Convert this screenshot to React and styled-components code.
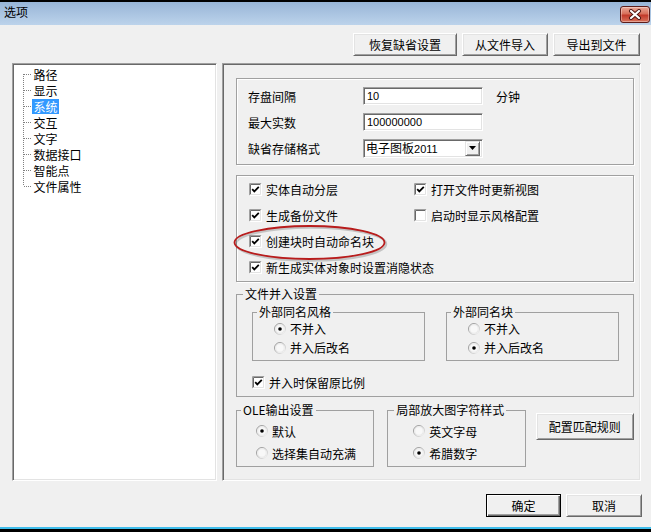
import React from 'react'
import styled, { createGlobalStyle } from 'styled-components'

const GlobalStyle = createGlobalStyle`
  html, body {
    margin: 0;
    padding: 0;
    background: #000;
  }
  body {
    font-family: "Liberation Sans", "Noto Sans CJK SC", sans-serif;
    font-size: 12px;
    color: #000;
  }
  * {
    box-sizing: border-box;
  }
`

const Window = styled.div`
  width: 651px;
  height: 527px;
  margin-top: 2px;
  background: #f0f0f0;
  border-bottom: 2px solid #3fbdeb;
  display: flex;
  flex-direction: column;
`

const TitleBar = styled.div`
  height: 23px;
  display: flex;
  justify-content: space-between;
  align-items: flex-start;
  padding: 0 1px 0 4px;
  background: linear-gradient(#98b5d7, #bcd3eb);
`

const Title = styled.span`
  line-height: 23px;
  font-size: 12px;
`

const CloseButton = styled.div`
  width: 30px;
  height: 17px;
  margin-top: 4px;
  border: 1px solid #5e1d1a;
  border-radius: 3px;
  display: flex;
  align-items: center;
  justify-content: center;
  background: linear-gradient(#eaa897, #d8705b 45%, #c23a2a 55%, #d9735c);
  box-shadow: inset 0 0 0 1px rgba(255, 255, 255, 0.35);
`

const TopBar = styled.div`
  display: flex;
  justify-content: flex-end;
  gap: 5px;
  margin-top: 8px;
  padding-right: 11px;
`

const Button = styled.button`
  width: ${p => p.$w}px;
  height: ${p => p.$h || 23}px;
  padding: 0;
  margin: 0;
  font-family: "Noto Sans CJK SC", sans-serif;
  font-size: 12px;
  color: #000;
  background: #f0f0f0;
  border: 1px solid;
  border-color: ${p => (p.$default ? '#000' : '#fff #696969 #696969 #fff')};
  box-shadow: ${p =>
    p.$default
      ? 'inset 1px 1px 0 #fff, inset -1px -1px 0 #696969, inset -2px -2px 0 #a0a0a0'
      : 'inset 1px 1px 0 #e3e3e3, inset -1px -1px 0 #a0a0a0'};
`

const Main = styled.div`
  display: flex;
  gap: 5px;
  margin-top: 7px;
  padding-left: 12px;
  height: 418px;
`

const sunken = `
  border: 1px solid;
  border-color: #a0a0a0 #fff #fff #a0a0a0;
  box-shadow: inset 1px 1px 0 #696969, inset -1px -1px 0 #e3e3e3;
`

const TreePanel = styled.div`
  width: 205px;
  background: #fff;
  ${sunken}
  padding: 2px 0 0 10px;
  font-family: "Noto Sans CJK SC", sans-serif;
`

const TreeItem = styled.div`
  display: flex;
  align-items: center;
  height: 16px;
`

const Connector = styled.span`
  width: 9px;
  height: 16px;
  flex: none;
  background-image: repeating-linear-gradient(to bottom, #808080 0 1px, transparent 1px 2px),
    repeating-linear-gradient(to right, #808080 0 1px, transparent 1px 2px);
  background-repeat: no-repeat;
  background-size: 1px ${p => (p.$pos === 'mid' ? 16 : 8)}px, 8px 1px;
  background-position: 0 ${p => (p.$pos === 'first' ? 8 : 0)}px, 1px 8px;
`

const TreeLabel = styled.span`
  padding: 0 1.5px;
  line-height: 15px;
  font-size: 12px;
  background: ${p => (p.$selected ? '#3399ff' : 'transparent')};
  color: ${p => (p.$selected ? '#fff' : '#000')};
`

const Panel = styled.div`
  width: 419px;
  ${sunken}
  padding: 14px 6px 0 13px;
  display: flex;
  flex-direction: column;
  font-family: "Noto Sans CJK SC", sans-serif;
`

const Box = styled.div`
  position: relative;
  border: 1px solid #a0a0a0;
  box-shadow: inset 1px 1px 0 #fff, 1px 1px 0 #fff;
`

const SettingsBox = styled(Box)`
  height: 87px;
  padding: 8px 0 0 11px;
  display: flex;
  flex-direction: column;
  gap: 8px;
`

const FormRow = styled.div`
  display: flex;
  align-items: center;
  height: 18px;
`

const FieldLabel = styled.span`
  width: 115px;
  font-size: 12px;
`

const TextInput = styled.input`
  width: 120px;
  height: 18px;
  margin: 0;
  padding: 0 0 0 3px;
  background: #fff;
  font-family: "Liberation Sans", sans-serif;
  font-size: 11px;
  color: #000;
  outline: none;
  ${sunken}
`

const Unit = styled.span`
  margin-left: 13px;
  font-size: 12px;
`

const Select = styled.div`
  width: 120px;
  height: 19px;
  display: flex;
  align-items: center;
  background: #fff;
  ${sunken}
  padding: 0 2px 0 2px;
`

const SelectText = styled.span`
  flex: 1;
  font-size: 12px;
  line-height: 17px;
`

const SelectNum = styled.span`
  font-family: "Liberation Sans", sans-serif;
  font-size: 11px;
`

const ArrowButton = styled.span`
  width: 15px;
  height: 15px;
  display: flex;
  align-items: center;
  justify-content: center;
  background: #f0f0f0;
  border: 1px solid;
  border-color: #e3e3e3 #696969 #696969 #e3e3e3;
  box-shadow: inset 1px 1px 0 #fff, inset -1px -1px 0 #a0a0a0;
`

const CheckBoxGroup = styled(Box)`
  margin-top: 10px;
  height: 107px;
  padding-left: 12px;
  display: grid;
  grid-template-columns: 165px 1fr;
  grid-auto-rows: 26px;
`

const OptionRow = styled.label`
  display: flex;
  align-items: center;
  height: ${p => p.$h || 26}px;
  font-size: 12px;
  white-space: nowrap;
  grid-column: ${p => (p.$wide ? '1 / span 2' : 'auto')};
`

const OptionText = styled.span`
  margin-left: ${p => p.$gap || 4}px;
`

const Annotation = styled.svg`
  position: absolute;
  left: -5px;
  top: 48px;
  pointer-events: none;
`

const GroupBox = styled.fieldset`
  margin: 0;
  padding: 0;
  min-width: 0;
  width: ${p => (p.$w ? `${p.$w}px` : 'auto')};
  border: 1px solid #a0a0a0;
  border-top-color: #a0a0a0;
`

const Legend = styled.legend`
  margin-left: ${p => p.$ml || 5}px;
  padding: 0 2px;
  line-height: 14px;
  font-size: 12px;
`

const MergeGroup = styled(GroupBox)`
  margin-top: 5px;
`

const MergeBody = styled.div`
  padding: 4px 14px 6px 15px;
`

const InnerRow = styled.div`
  display: flex;
  gap: 21px;
`

const RadioList = styled.div`
  padding: ${p => p.$pt || 0}px 0 ${p => p.$pb || 3}px ${p => p.$pl}px;
`

const KeepRatio = styled(OptionRow)`
  margin-top: 13px;
`

const BottomGroups = styled.div`
  display: flex;
  align-items: flex-start;
  margin-top: 6px;
`

const SideGroup = styled(GroupBox)`
  margin-left: ${p => p.$ml || 0}px;
`

const RuleButton = styled(Button)`
  margin: 10px 0 0 10px;
`

const Footer = styled.div`
  display: flex;
  justify-content: flex-end;
  gap: 5px;
  margin-top: 13px;
  padding-right: 9px;
`

function CheckBox({ checked }) {
  return (
    <svg width="13" height="13" viewBox="0 0 13 13" style={{ flex: 'none' }}>
      <rect x="0" y="0" width="13" height="13" fill="#fff" />
      <path d="M0.5 12.5 V0.5 H12.5" stroke="#a0a0a0" fill="none" />
      <path d="M1.5 11.5 V1.5 H11.5" stroke="#696969" fill="none" />
      <path d="M0.5 12.5 H12.5 V0.5" stroke="#fff" fill="none" />
      <path d="M1.5 11.5 H11.5 V1.5" stroke="#e3e3e3" fill="none" />
      {checked && (
        <path d="M3.2 6.2 L5.3 8.4 L9.8 3.8" stroke="#000" strokeWidth="1.8" fill="none" />
      )}
    </svg>
  )
}

function Radio({ checked }) {
  return (
    <svg width="12" height="12" viewBox="0 0 12 12" style={{ flex: 'none' }}>
      <defs>
        <linearGradient id="rg" x1="0" y1="0" x2="1" y2="1">
          <stop offset="0" stopColor="#8a8a8a" />
          <stop offset="0.5" stopColor="#b8b8b8" />
          <stop offset="1" stopColor="#f4f4f4" />
        </linearGradient>
      </defs>
      <circle cx="6" cy="6" r="5.5" fill="#fff" stroke="url(#rg)" />
      <circle cx="6" cy="6" r="4.3" fill="#f8f8f8" stroke="#dcdcdc" strokeWidth="0.6" />
      {checked && <circle cx="6" cy="6" r="1.8" fill="#000" />}
    </svg>
  )
}

const treeItems = ['路径', '显示', '系统', '交互', '文字', '数据接口', '智能点', '文件属性']

const checks = [
  { text: '实体自动分层', checked: true },
  { text: '打开文件时更新视图', checked: true },
  { text: '生成备份文件', checked: true },
  { text: '启动时显示风格配置', checked: false },
  { text: '创建块时自动命名块', checked: true, wide: true },
  { text: '新生成实体对象时设置消隐状态', checked: true, wide: true },
]

function RadioOption({ text, checked, h }) {
  return (
    <OptionRow $h={h}>
      <Radio checked={checked} />
      <OptionText $gap={4}>{text}</OptionText>
    </OptionRow>
  )
}

export default function App() {
  return (
    <>
      <GlobalStyle />
      <Window>
        <TitleBar>
          <Title>选项</Title>
          <CloseButton>
            <svg width="14" height="11" viewBox="0 0 14 11">
              <path
                d="M3 2 L11 9 M11 2 L3 9"
                stroke="#4a1410"
                strokeWidth="4"
                strokeLinecap="round"
              />
              <path d="M3 2 L11 9 M11 2 L3 9" stroke="#fff" strokeWidth="2.2" strokeLinecap="round" />
            </svg>
          </CloseButton>
        </TitleBar>

        <TopBar>
          <Button $w={104}>恢复缺省设置</Button>
          <Button $w={86}>从文件导入</Button>
          <Button $w={87}>导出到文件</Button>
        </TopBar>

        <Main>
          <TreePanel>
            {treeItems.map((item, i) => (
              <TreeItem key={item}>
                <Connector $pos={i === 0 ? 'first' : i === treeItems.length - 1 ? 'last' : 'mid'} />
                <TreeLabel $selected={item === '系统'}>{item}</TreeLabel>
              </TreeItem>
            ))}
          </TreePanel>

          <Panel>
            <SettingsBox>
              <FormRow>
                <FieldLabel>存盘间隔</FieldLabel>
                <TextInput readOnly value="10" />
                <Unit>分钟</Unit>
              </FormRow>
              <FormRow>
                <FieldLabel>最大实数</FieldLabel>
                <TextInput readOnly value="100000000" />
              </FormRow>
              <FormRow>
                <FieldLabel>缺省存储格式</FieldLabel>
                <Select>
                  <SelectText>
                    电子图板<SelectNum>2011</SelectNum>
                  </SelectText>
                  <ArrowButton>
                    <svg width="7" height="4" viewBox="0 0 7 4">
                      <path d="M0 0 H7 L3.5 4 Z" fill="#000" />
                    </svg>
                  </ArrowButton>
                </Select>
              </FormRow>
            </SettingsBox>

            <CheckBoxGroup>
              {checks.map(c => (
                <OptionRow key={c.text} $wide={c.wide}>
                  <CheckBox checked={c.checked} />
                  <OptionText>{c.text}</OptionText>
                </OptionRow>
              ))}
              <Annotation width="160" height="40" viewBox="0 0 160 40">
                <ellipse cx="79" cy="20" rx="75" ry="16.5" fill="none" stroke="rgba(0,0,0,0.18)" strokeWidth="2.5" />
                <ellipse cx="77.5" cy="18.5" rx="75" ry="16.5" fill="none" stroke="#b81c1c" strokeWidth="1.8" />
              </Annotation>
            </CheckBoxGroup>

            <MergeGroup>
              <Legend $ml={6}>文件并入设置</Legend>
              <MergeBody>
                <InnerRow>
                  <GroupBox $w={174}>
                    <Legend $ml={4}>外部同名风格</Legend>
                    <RadioList $pl={21}>
                      <RadioOption text="不并入" checked h={19} />
                      <RadioOption text="并入后改名" h={19} />
                    </RadioList>
                  </GroupBox>
                  <GroupBox $w={174}>
                    <Legend $ml={4}>外部同名块</Legend>
                    <RadioList $pl={21}>
                      <RadioOption text="不并入" h={19} />
                      <RadioOption text="并入后改名" checked h={19} />
                    </RadioList>
                  </GroupBox>
                </InnerRow>
                <KeepRatio $h={16}>
                  <CheckBox checked />
                  <OptionText>并入时保留原比例</OptionText>
                </KeepRatio>
              </MergeBody>
            </MergeGroup>

            <BottomGroups>
              <SideGroup $w={139}>
                <Legend $ml={4}>OLE输出设置</Legend>
                <RadioList $pl={19} $pt={3} $pb={2}>
                  <RadioOption text="默认" checked h={22} />
                  <RadioOption text="选择集自动充满" h={22} />
                </RadioList>
              </SideGroup>
              <SideGroup $w={139} $ml={13}>
                <Legend $ml={6}>局部放大图字符样式</Legend>
                <RadioList $pl={25} $pt={3} $pb={2}>
                  <RadioOption text="英文字母" h={22} />
                  <RadioOption text="希腊数字" checked h={22} />
                </RadioList>
              </SideGroup>
              <RuleButton $w={99} $h={27}>
                配置匹配规则
              </RuleButton>
            </BottomGroups>
          </Panel>
        </Main>

        <Footer>
          <Button $w={75} $default>
            确定
          </Button>
          <Button $w={76}>取消</Button>
        </Footer>
      </Window>
    </>
  )
}
